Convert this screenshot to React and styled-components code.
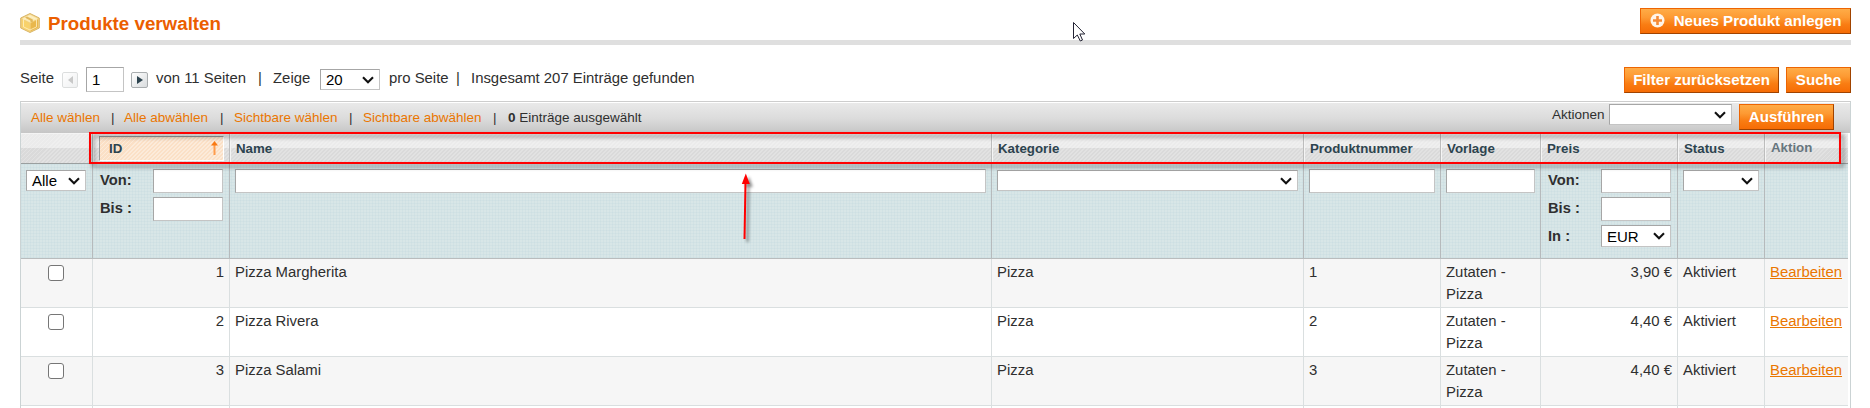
import React from "react";
import styled, { createGlobalStyle } from "styled-components";

const GlobalStyle = createGlobalStyle`
  * {
    box-sizing: border-box;
  }
  body {
    margin: 0;
    background: #fff;
    color: #2f2f2f;
    font: 14.9px/21.6px "Liberation Sans", Arial, sans-serif;
    overflow: hidden;
  }
`;

const Page = styled.div`
  position: relative;
  height: 408px;
  padding: 0 19px 0 20px;
  overflow: hidden;
`;

const ContentHeader = styled.div`
  display: flex;
  justify-content: space-between;
  height: 45px;
  padding-top: 8px;
  border-bottom: 5px solid #dfdfdf;
`;
const Title = styled.h3`
  display: flex;
  gap: 8px;
  margin: 5px 0 0;
  height: 21px;
  font-size: 18.75px;
  line-height: 21px;
  color: #eb5e00;
  svg {
    flex: none;
  }
`;

const Button = styled.button`
  display: flex;
  align-items: center;
  justify-content: center;
  gap: 9px;
  width: ${({ $width }) => $width}px;
  height: 26px;
  padding: 0 0 ${({ $lift }) => $lift || 0}px;
  border: 1px solid;
  border-color: #ed6502 #a04300 #a04300 #ed6502;
  background: linear-gradient(#ffac47 0%, #fd9a33 35%, #f97d13 65%, #f66c05 100%);
  color: #fff;
  font: bold 15.1px "Liberation Sans", Arial, sans-serif;
  white-space: nowrap;
`;

const Actions = styled.div`
  display: flex;
  align-items: center;
  height: 56px;
  padding-top: 13px;
`;
const Slot = styled.span`
  width: ${({ $width }) => $width}px;
  flex: none;
  white-space: nowrap;
  padding-bottom: ${({ $lift }) => $lift || 0}px;
`;
const Spacer = styled.div`
  flex: 1;
`;
const PageArrow = styled.span`
  display: flex;
  align-items: center;
  justify-content: center;
  flex: none;
  width: ${({ $width }) => $width}px;
  height: 16px;
  margin-right: 8px;
  border: 1px solid #a9adaf;
  border-radius: 2px;
  background: linear-gradient(135deg, #fff, #d9dcde);
  opacity: ${({ $disabled }) => ($disabled ? 0.4 : 1)};
`;

const Field = styled.div`
  display: flex;
  align-items: center;
  justify-content: space-between;
  flex: none;
  width: ${({ $width }) => ($width ? `${$width}px` : "auto")};
  height: ${({ $height }) => $height || 24}px;
  padding: 0 5px;
  border: 1px solid;
  border-color: #a6a6a6 #c4c4c4 #c4c4c4 #a6a6a6;
  background: #fff;
  color: #000;
  font-size: 15px;
`;

const Grid = styled.div`
  border: 1px solid #cbd3d4;
  border-top-color: #cdcdcd;
  border-bottom: 0;
`;
const MassAction = styled.div`
  display: flex;
  height: 31px;
  border-top: 1px solid #fff;
  background: linear-gradient(#e9e9e9, #dcdcdc 50%, #c6c6c6);
  padding-left: 10px;
  font-size: 13.5px;
  line-height: 30px;
`;
const MassLink = styled(Slot)`
  color: #ea7601;
`;
const MassForm = styled.div`
  display: flex;
  align-items: flex-start;
  margin-left: auto;
  padding: 1px 16px 0 0;
  line-height: 22px;
`;

const Row = styled.div`
  display: grid;
  grid-template-columns: 72px 137px 762px 312px 137px 100px 137px 87px 83px;
  width: 1827px;
`;
const HeaderRow = styled(Row)`
  height: 31px;
  border-top: 1px solid #f4f4f4;
  border-bottom: 1px solid #9a9f9f;
  background:
    repeating-linear-gradient(135deg, rgba(255, 255, 255, 0.22) 0 1.4px, transparent 1.4px 2.83px),
    linear-gradient(#ebebeb 0 14px, #dadada 14px);
`;
const HeaderCell = styled.div`
  padding: 0 5px;
  border-left: ${({ $first }) => ($first ? 0 : "1px solid #f5f5f5")};
  border-right: ${({ $last }) => ($last ? 0 : "1px solid #bdbdbd")};
  color: ${({ $muted }) => ($muted ? "#67767e" : "#2d444f")};
  font-size: 13.3px;
  font-weight: bold;
  line-height: ${({ $muted }) => ($muted ? 27 : 29)}px;
`;
const Sorted = styled.div`
  display: flex;
  justify-content: space-between;
  align-items: center;
  width: 125px;
  height: 25px;
  margin-top: 2px;
  padding: 0 5px 1px 9px;
  border: 1px solid;
  border-color: #999 #fff #fff #999;
  background:
    repeating-linear-gradient(135deg, rgba(255, 255, 255, 0.35) 0 1.4px, transparent 1.4px 2.83px),
    #fbe0c6;
`;

const FilterRow = styled(Row)`
  height: 95px;
  border-bottom: 1px solid #b9bcbd;
  background:
    repeating-linear-gradient(90deg, rgba(185, 210, 218, 0.2) 0 1px, transparent 1px 3px),
    repeating-linear-gradient(rgba(185, 210, 218, 0.2) 0 1px, transparent 1px 3px),
    #d8e6e7;
`;
const FilterCell = styled.div`
  padding: ${({ $select }) => ($select ? 6 : 5)}px 5px 0;
  border-right: ${({ $last }) => ($last ? 0 : "1px solid #b6babc")};
`;
const RangeLine = styled.div`
  display: flex;
  justify-content: space-between;
  height: 28px;
  padding: 0 1px 0 2px;
  font-size: 14.7px;
  font-weight: bold;
  line-height: 23px;
  ${Field} {
    font-weight: normal;
  }
`;

const DataRow = styled(Row)`
  height: 49px;
  border-bottom: 1px solid #dadfe0;
  background: ${({ $odd }) => ($odd ? "#f6f6f6" : "#fff")};
`;
const Cell = styled.div`
  padding: 3px 5px 0;
  border-right: ${({ $last }) => ($last ? 0 : "1px solid #dadfe0")};
  text-align: ${({ $align }) => $align || "left"};
`;
const Checkbox = styled.input`
  appearance: none;
  display: block;
  width: 16px;
  height: 16px;
  margin: 3px 0 0 22px;
  border: 1px solid #767676;
  border-radius: 3px;
  background: #fff;
`;
const EditLink = styled.a`
  color: #ea7601;
  text-decoration: underline;
`;

const Highlight = styled.div`
  position: absolute;
  left: 89px;
  top: 132px;
  width: 1752px;
  height: 32px;
  border: 2px solid #f00;
  filter: drop-shadow(3px 3px 2px rgba(0, 0, 0, 0.5));
`;
const Overlay = styled.svg`
  position: absolute;
  left: ${({ $left }) => $left}px;
  top: ${({ $top }) => $top}px;
  overflow: visible;
`;

const Chevron = () => (
  <svg width="12" height="8" viewBox="0 0 12 8">
    <path d="M1 1.2 6 6.2l5-5" fill="none" stroke="#111" strokeWidth="2.1" />
  </svg>
);

const Select = ({ width, children, height = 21 }) => (
  <Field $width={width} $height={height}>
    <span>{children}</span>
    <Chevron />
  </Field>
);

const BoxIcon = () => (
  <svg width="20" height="20" viewBox="0 0 20 20">
    <path d="M10 0.5 19.3 5v10L10 19.5 0.7 15V5z" fill="#f3cf78" stroke="#d8b66c" />
    <path d="M10 1.5 18 5.4 10 9.4 2 5.4z" fill="#fbeab5" />
    <path d="M2 6.6l7.3 3.6v8L2 14.6z" fill="#f8d26b" />
    <path d="M18 6.6l-7.3 3.6v8l7.3-3.6z" fill="#e9b74c" />
    <path d="M3.5 6.5 10 3.3l6.5 3.2v7.4L10 17l-6.5-3.1z" fill="none" stroke="#fff3cb" strokeOpacity=".75" />
    <path d="M7 3.6l5.8 3v3.2l-2.4-1.1V7.6L5 4.8z" fill="#e2b85c" />
  </svg>
);

const AddIcon = () => (
  <svg width="15" height="15" viewBox="0 0 15 15">
    <circle cx="7.5" cy="7.5" r="7" fill="#fff4e8" />
    <path d="M7.5 3v9M3 7.5h9" stroke="#f58a35" strokeWidth="2.6" />
  </svg>
);

const products = [
  { id: 1, name: "Pizza Margherita", price: "3,90 €" },
  { id: 2, name: "Pizza Rivera", price: "4,40 €" },
  { id: 3, name: "Pizza Salami", price: "4,40 €" },
];

const Pager = () => (
  <Actions>
    <Slot $width={42} $lift={2}>Seite</Slot>
    <PageArrow $width={16} $disabled>
      <svg width="5" height="8"><path d="M5 0v8L0 4z" fill="#777" /></svg>
    </PageArrow>
    <Field $width={38} $height={25}>1</Field>
    <Slot $width={7} />
    <PageArrow $width={17}>
      <svg width="6" height="8"><path d="M0 0v8l6-4z" fill="#2d444f" /></svg>
    </PageArrow>
    <Slot $width={102} $lift={2}>von 11 Seiten</Slot>
    <Slot $width={15} $lift={2}>|</Slot>
    <Slot $width={47} $lift={2}>Zeige</Slot>
    <Select width={60}>20</Select>
    <Slot $width={9} />
    <Slot $width={67} $lift={2}>pro Seite</Slot>
    <Slot $width={15} $lift={2}>|</Slot>
    <Slot $width={230} $lift={2}>Insgesamt 207 Einträge gefunden</Slot>
    <Spacer />
    <Button $width={155}>Filter zurücksetzen</Button>
    <Slot $width={7} />
    <Button $width={65}>Suche</Button>
  </Actions>
);

const Header = () => (
  <HeaderRow>
    <HeaderCell $first />
    <HeaderCell>
      <Sorted>
        ID
        <svg width="7" height="14" viewBox="0 0 7 14">
          <path d="M3.5 3v11" stroke="#ff9c4c" strokeWidth="2" />
          <path d="M3.5 0 7 4.5H0z" fill="#f97a14" />
        </svg>
      </Sorted>
    </HeaderCell>
    <HeaderCell>Name</HeaderCell>
    <HeaderCell>Kategorie</HeaderCell>
    <HeaderCell>Produktnummer</HeaderCell>
    <HeaderCell>Vorlage</HeaderCell>
    <HeaderCell>Preis</HeaderCell>
    <HeaderCell>Status</HeaderCell>
    <HeaderCell $muted $last>Aktion</HeaderCell>
  </HeaderRow>
);

const Filters = () => (
  <FilterRow>
    <FilterCell $select><Select width={60}>Alle</Select></FilterCell>
    <FilterCell>
      <RangeLine>Von:<Field $width={70} /></RangeLine>
      <RangeLine>Bis :<Field $width={70} /></RangeLine>
    </FilterCell>
    <FilterCell><Field /></FilterCell>
    <FilterCell $select><Select /></FilterCell>
    <FilterCell><Field /></FilterCell>
    <FilterCell><Field /></FilterCell>
    <FilterCell>
      <RangeLine>Von:<Field $width={70} /></RangeLine>
      <RangeLine>Bis :<Field $width={70} /></RangeLine>
      <RangeLine>In :<Select width={70} height={22}>EUR</Select></RangeLine>
    </FilterCell>
    <FilterCell $select><Select width={76} /></FilterCell>
    <FilterCell $last />
  </FilterRow>
);

const App = () => {
  return (
    <>
      <GlobalStyle />
      <Page>
        <ContentHeader>
          <Title>
            <BoxIcon />
            Produkte verwalten
          </Title>
          <Button $width={211} $lift={2}>
            <AddIcon />
            Neues Produkt anlegen
          </Button>
        </ContentHeader>
        <Pager />
        <Grid>
          <MassAction>
            <MassLink $width={80}>Alle wählen</MassLink>
            <Slot $width={13}>|</Slot>
            <MassLink $width={96}>Alle abwählen</MassLink>
            <Slot $width={14}>|</Slot>
            <MassLink $width={115}>Sichtbare wählen</MassLink>
            <Slot $width={14}>|</Slot>
            <MassLink $width={130}>Sichtbare abwählen</MassLink>
            <Slot $width={15}>|</Slot>
            <Slot $width={150}><b>0</b> Einträge ausgewählt</Slot>
            <MassForm>
              <Slot $width={57}>Aktionen</Slot>
              <Slot as="div" $width={130}><Select width={123} /></Slot>
              <Button $width={95} $lift={2}>Ausführen</Button>
            </MassForm>
          </MassAction>
          <Header />
          <Filters />
          {products.map((item) => (
            <DataRow key={item.id} $odd={item.id % 2 === 1}>
              <Cell><Checkbox type="checkbox" /></Cell>
              <Cell $align="right">{item.id}</Cell>
              <Cell>{item.name}</Cell>
              <Cell>Pizza</Cell>
              <Cell>{item.id}</Cell>
              <Cell>Zutaten - Pizza</Cell>
              <Cell $align="right">{item.price}</Cell>
              <Cell>Aktiviert</Cell>
              <Cell $last><EditLink>Bearbeiten</EditLink></Cell>
            </DataRow>
          ))}
          <DataRow>
            {[1, 2, 3, 4, 5, 6, 7, 8].map((n) => (
              <Cell key={n} />
            ))}
          </DataRow>
        </Grid>
        <Highlight />
        <Overlay $left={740} $top={172} width="14" height="70">
          <g style={{ filter: "drop-shadow(3px 3px 1.5px rgba(0,0,0,.45))" }}>
            <path d="M4.5 67 5.5 10" stroke="#f00" strokeWidth="2" />
            <path d="M5.8 1.5 9.8 12H1.8z" fill="#f00" />
          </g>
        </Overlay>
        <Overlay $left={1073} $top={22} width="13" height="20">
          <path d="M.5.5v16l3.8-3.5 3 6 2.2-1-2.7-6h5z" fill="#fff" stroke="#223" />
        </Overlay>
      </Page>
    </>
  );
};

export default App;
